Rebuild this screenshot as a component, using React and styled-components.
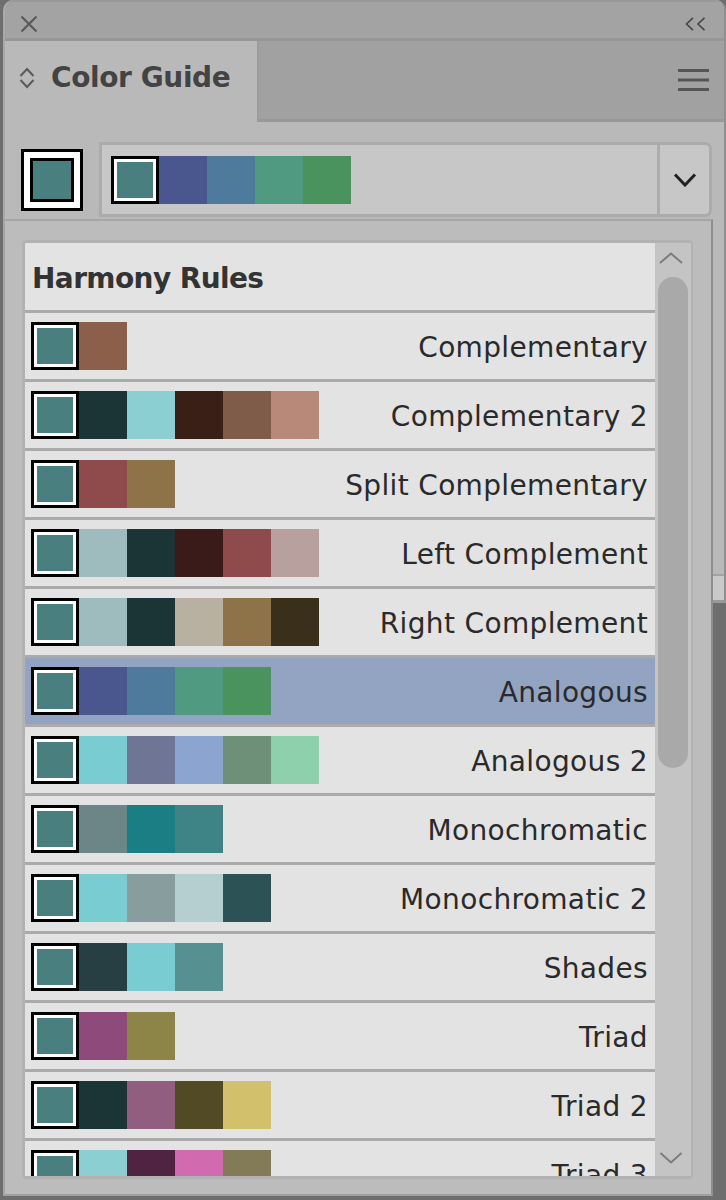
import React from "react";
import styled, { createGlobalStyle } from "styled-components";

const GlobalStyle = createGlobalStyle`
  html, body { margin: 0; padding: 0; background: #6e6e6e; }
  * { box-sizing: border-box; }
`;

const TEAL = "#4a7f80";

const rules = [
  { name: "Complementary", colors: ["#8b5f49"] },
  { name: "Complementary 2", colors: ["#1b3537", "#8ccfd2", "#3a1f16", "#7f5c4a", "#b88878"] },
  { name: "Split Complementary", colors: ["#8f4a4b", "#8e7248"] },
  { name: "Left Complement", colors: ["#9ebcbd", "#1b3537", "#3a1b19", "#8f4a4b", "#b8a09f"] },
  { name: "Right Complement", colors: ["#9ebcbd", "#1b3537", "#b8b0a0", "#8e7248", "#3a2f1b"] },
  { name: "Analogous", colors: ["#4a578f", "#4e7a9b", "#509a82", "#4b935e"], active: true },
  { name: "Analogous 2", colors: ["#78ccd2", "#6f7595", "#8ca5d0", "#6f9078", "#8dd0ab"] },
  { name: "Monochromatic", colors: ["#6c8586", "#1b7e84", "#3e8486"] },
  { name: "Monochromatic 2", colors: ["#78ccd2", "#879d9e", "#b5cfd1", "#2d5255"] },
  { name: "Shades", colors: ["#273f43", "#78ccd2", "#569091"] },
  { name: "Triad", colors: ["#8f4a7c", "#8d8448"] },
  { name: "Triad 2", colors: ["#1b3537", "#925e80", "#514a24", "#d2c06c"] },
  { name: "Triad 3", colors: ["#8ccfd2", "#4f2341", "#d16aaf", "#837a58"] },
];

const Root = styled.div`
  position: relative;
  width: 726px;
  height: 1200px;
  overflow: hidden;
  background: #6e6e6e;
  font-family: "DejaVu Sans", Verdana, sans-serif;
`;

const Panel = styled.div`
  margin-left: 3px;
  width: 723px;
  height: 603px;
  display: flex;
  flex-direction: column;
  background: #b9b9b9;
  border-left: 2px solid #a9a9a9;
  border-right: 2px solid #8f8f8f;
  border-bottom: 3px solid #9a9a9a;
  border-radius: 10px 10px 0 0;
  overflow: hidden;
`;

const TitleBar = styled.div`
  height: 41px;
  flex: none;
  display: flex;
  align-items: center;
  justify-content: space-between;
  padding: 7px 18px 0 15px;
  background: #a3a3a3;
  border-top: 2px solid #999;
  border-bottom: 3px solid #979797;
`;

const TabRow = styled.div`
  height: 81px;
  flex: none;
  display: flex;
`;

const Tab = styled.div`
  width: 254px;
  display: flex;
  align-items: center;
  gap: 16px;
  padding: 0 0 8px 14px;
  background: #b9b9b9;
  border-right: 2px solid #9c9c9c;
`;

const TabTitle = styled.span`
  font-weight: bold;
  font-size: 28px;
  letter-spacing: -0.4px;
  color: #434343;
`;

const TabFiller = styled.div`
  flex: 1;
  display: flex;
  align-items: center;
  justify-content: flex-end;
  padding-right: 15px;
  background: #a1a1a1;
  border-bottom: 3px solid #989898;
`;

const Controls = styled.div`
  display: flex;
  align-items: center;
  gap: 16px;
  padding: 20px 12px 0 16px;
`;

const BigSwatch = styled.div`
  width: 62px;
  height: 62px;
  flex: none;
  border: 3px solid #000;
  background: #fff;
  padding: 6px;
`;

const BigSwatchInner = styled.div`
  width: 44px;
  height: 44px;
  border: 3px solid #000;
  background: ${TEAL};
`;

const Dropdown = styled.div`
  flex: 1;
  height: 75px;
  display: flex;
  background: #c7c7c7;
  border: 3px solid #ababab;
  border-radius: 0 7px 7px 0;
`;

const DropSwatches = styled.div`
  flex: 1;
  display: flex;
  align-items: center;
  padding-left: 9px;
`;

const DropButton = styled.div`
  width: 52px;
  display: flex;
  align-items: center;
  justify-content: center;
  border-left: 3px solid #acacac;
`;

const BottomField = styled.div`
  margin-top: auto;
  height: 26px;
  background: #c9c9c9;
  border-top: 2px solid #a3a3a3;
`;

const Popup = styled.div`
  position: absolute;
  left: 3px;
  top: 219px;
  width: 710px;
  height: 977px;
  padding: 19px 18px 15px 17px;
  background: #bcbcbc;
  border: 2px solid #a6a6a6;
  border-right-color: #8e8e8e;
  border-bottom: 2px solid #a0a0a0;
`;

const ListFrame = styled.div`
  height: 100%;
  display: flex;
  background: #c4c4c4;
  border: 3px solid #b2b2b2;
  border-right-width: 2px;
  border-radius: 4px;
  overflow: hidden;
`;

const List = styled.div`
  width: 630px;
  flex: none;
  overflow: hidden;
  background: #e3e3e3;
`;

const Header = styled.div`
  height: 70px;
  display: flex;
  align-items: center;
  padding: 4px 0 0 7px;
  border-bottom: 3px solid #aaaaaa;
  font-weight: bold;
  font-size: 28px;
  letter-spacing: -0.6px;
  color: #333;
`;

const Row = styled.div`
  height: 69px;
  flex: none;
  display: flex;
  align-items: center;
  padding: 0 7px 0 6px;
  border-bottom: 3px solid #aaaaaa;
  background: ${(p) => (p.$active ? "#93a4c2" : "#e3e3e3")};
`;

const Swatches = styled.div`
  display: flex;
`;

const Swatch = styled.div`
  width: 48px;
  height: 48px;
  flex: none;
  background: ${(p) => p.$color};
  ${(p) =>
    p.$base &&
    `border: 3px solid #000; box-shadow: inset 0 0 0 3px #fff;`}
`;

const Label = styled.span`
  margin-left: auto;
  padding-top: 3px;
  font-size: 28px;
  letter-spacing: 0.35px;
  color: #2a2a2a;
  white-space: nowrap;
`;

const Scrollbar = styled.div`
  flex: 1;
  display: flex;
  flex-direction: column;
  background: #c4c4c4;
`;

const ArrowBox = styled.div`
  height: ${(p) => p.$h}px;
  flex: none;
  display: flex;
  justify-content: center;
  align-items: flex-start;
  padding-top: ${(p) => p.$pt}px;
  padding-right: 4px;
`;

const Thumb = styled.div`
  width: 30px;
  height: 491px;
  margin-left: 3px;
  flex: none;
  border-radius: 15px;
  background: #a9a9a9;
`;

const Spacer = styled.div`
  flex: 1;
`;

const CloseIcon = () => (
  <svg width="18" height="18" viewBox="0 0 18 18">
    <path d="M1.5 1.5 L16.5 16.5 M16.5 1.5 L1.5 16.5" stroke="#5a5a5a" strokeWidth="2.2" fill="none" />
  </svg>
);

const CollapseIcon = () => (
  <svg width="21" height="14" viewBox="0 0 21 14">
    <polyline points="8,0.8 1.5,7 8,13.2" stroke="#474747" strokeWidth="1.6" fill="none" />
    <polyline points="19.5,0.8 13,7 19.5,13.2" stroke="#474747" strokeWidth="1.6" fill="none" />
  </svg>
);

const UpDownIcon = () => (
  <svg width="16" height="24" viewBox="0 0 16 24">
    <polyline points="1.5,10 8,3 14.5,10" stroke="#5a5a5a" strokeWidth="2" fill="none" />
    <polyline points="1.5,14 8,21 14.5,14" stroke="#5a5a5a" strokeWidth="2" fill="none" />
  </svg>
);

const MenuIcon = () => (
  <svg width="31" height="22" viewBox="0 0 31 22">
    <rect x="0" y="0" width="31" height="3" fill="#555" />
    <rect x="0" y="9.5" width="31" height="3" fill="#555" />
    <rect x="0" y="19" width="31" height="3" fill="#555" />
  </svg>
);

const ChevronDown = ({ w = 24, h = 14, color = "#222", sw = 3 }) => (
  <svg width={w} height={h} viewBox={`0 0 ${w} ${h}`}>
    <polyline points={`${sw / 2 + 0.5},${sw / 2} ${w / 2},${h - sw / 2 - 0.5} ${w - sw / 2 - 0.5},${sw / 2}`} stroke={color} strokeWidth={sw} fill="none" />
  </svg>
);

const ChevronUp = ({ w = 24, h = 12, color = "#7c7c7c", sw = 2 }) => (
  <svg width={w} height={h} viewBox={`0 0 ${w} ${h}`}>
    <polyline points={`1,${h - 1} ${w / 2},1.5 ${w - 1},${h - 1}`} stroke={color} strokeWidth={sw} fill="none" />
  </svg>
);

export default function App() {
  const dropColors = ["#4a578f", "#4e7a9b", "#509a82", "#4b935e"];
  return (
    <Root>
      <GlobalStyle />
      <Panel>
        <TitleBar>
          <CloseIcon />
          <CollapseIcon />
        </TitleBar>
        <TabRow>
          <Tab>
            <UpDownIcon />
            <TabTitle>Color Guide</TabTitle>
          </Tab>
          <TabFiller>
            <MenuIcon />
          </TabFiller>
        </TabRow>
        <Controls>
          <BigSwatch>
            <BigSwatchInner />
          </BigSwatch>
          <Dropdown>
            <DropSwatches>
              <Swatch $color={TEAL} $base />
              {dropColors.map((c) => (
                <Swatch key={c} $color={c} />
              ))}
            </DropSwatches>
            <DropButton>
              <ChevronDown />
            </DropButton>
          </Dropdown>
        </Controls>
        <BottomField />
      </Panel>
      <Popup>
        <ListFrame>
          <List>
            <Header>Harmony Rules</Header>
            {rules.map((r) => (
              <Row key={r.name} $active={r.active}>
                <Swatches>
                  <Swatch $color={TEAL} $base />
                  {r.colors.map((c, i) => (
                    <Swatch key={i} $color={c} />
                  ))}
                </Swatches>
                <Label>{r.name}</Label>
              </Row>
            ))}
          </List>
          <Scrollbar>
            <ArrowBox $h={34} $pt={9}>
              <ChevronUp />
            </ArrowBox>
            <Thumb />
            <Spacer />
            <ArrowBox $h={24} $pt={0}>
              <ChevronDown w={24} h={12} color="#7c7c7c" sw={2} />
            </ArrowBox>
          </Scrollbar>
        </ListFrame>
      </Popup>
    </Root>
  );
}
